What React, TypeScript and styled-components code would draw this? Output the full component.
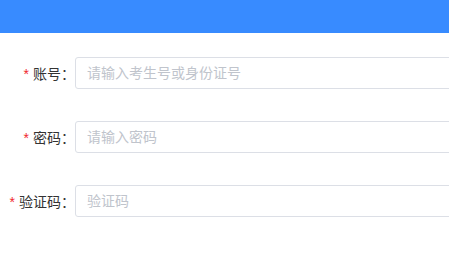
import styled, { createGlobalStyle } from 'styled-components';
import { ReactElement } from 'react';

const GlobalStyle = createGlobalStyle`
  html, body {
    margin: 0;
    padding: 0;
    background: #fff;
    overflow: hidden;
  }
  body {
    font-family: "Liberation Sans", "Noto Sans CJK SC", sans-serif;
  }
`;

const Header = styled.div`
  height: 33px;
  background: #388bff;
`;

const Form = styled.form`
  padding-top: 24px;
  display: flex;
  flex-direction: column;
  gap: 32px;
`;

const Row = styled.div`
  display: flex;
  align-items: center;
  height: 32px;
`;

const Label = styled.label`
  width: 75px;
  flex-shrink: 0;
  text-align: right;
  font-size: 14px;
  color: #333;
  white-space: nowrap;

  &::before {
    content: '*';
    color: #f0262d;
    margin-right: 4px;
  }
`;

const Input = styled.input`
  box-sizing: border-box;
  width: 400px;
  flex-shrink: 0;
  height: 32px;
  border: 1px solid #dcdfe6;
  border-radius: 3px;
  padding: 0 11px;
  font-size: 14px;
  font-family: inherit;
  color: #606266;
  outline: none;

  &::placeholder {
    color: #c0c4cc;
  }
`;

const fields = [
  { label: '账号：', placeholder: '请输入考生号或身份证号' },
  { label: '密码：', placeholder: '请输入密码' },
  { label: '验证码：', placeholder: '验证码' },
];

export default function App(): ReactElement {
  return (
    <>
      <GlobalStyle />
      <Header />
      <Form>
        {fields.map((f) => (
          <Row key={f.label}>
            <Label>{f.label}</Label>
            <Input placeholder={f.placeholder} />
          </Row>
        ))}
      </Form>
    </>
  );
}
